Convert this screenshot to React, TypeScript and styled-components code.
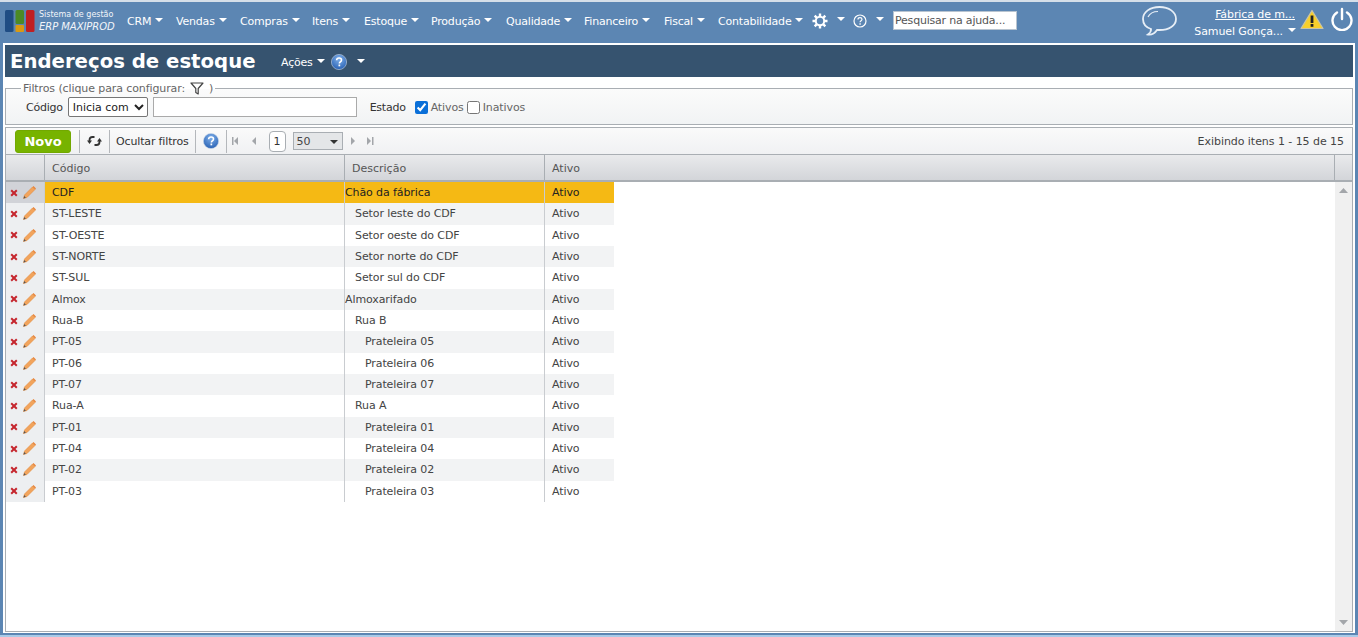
import React from "react";
import styled, { createGlobalStyle } from "styled-components";

const Global = createGlobalStyle`
  html, body { margin: 0; padding: 0; height: 100%; overflow: hidden; }
  body { font-family: Tahoma, "DejaVu Sans", sans-serif; font-size: 11px; color: #333; }
`;
const Page = styled.div`
  width: 1358px; height: 637px; box-sizing: border-box; background: #5c86b3;
  border-top: 2px solid #d5dfe9; border-bottom: 2px solid #a9cbe8;
  display: flex; flex-direction: column; overflow: hidden;
`;
const Nav = styled.nav`
  height: 41px; flex: none; display: flex; align-items: center; padding: 0 4px 4px 5px; box-sizing: border-box; color: #fff; position: relative;
`;
const Logo = styled.div`
  display: flex; align-items: center; gap: 4px; width: 122px; flex: none;
`;
const LogoText = styled.div`
  display: flex; flex-direction: column; font-size: 8px; line-height: 12px; color: #f2f5f9; white-space: nowrap;
  strong { font-size: 10px; font-weight: 400; font-style: italic; letter-spacing: -.05px; }
`;
const MenuItem = styled.div<{ $w: number }>`
  width: ${p => p.$w}px; flex: none; font-size: 11px; letter-spacing: -.2px; white-space: nowrap; display: flex; align-items: center; gap: 4px; color: #fff; padding-top: 1px;
`;
const Caret = styled.span<{ $color?: string; $gap?: number; $low?: boolean }>`
  width: 0; height: 0; flex: none; border-left: 4px solid transparent; border-right: 4px solid transparent; border-top: 4px solid ${p => p.$color || "#fff"};
  margin-top: ${p => p.$low ? 2 : -3}px; margin-left: ${p => p.$gap ?? 0}px;
`;
const IconSlot = styled.div<{ $w: number }>`
  width: ${p => p.$w}px; flex: none; display: flex; align-items: center; gap: 9px;
`;
const HelpSearch = styled.input`
  width: 124px; height: 19px; box-sizing: border-box; flex: none; border: 1px solid #b8c4d0; background: #fff; padding: 0 1px; font: 11px "DejaVu Sans", sans-serif; letter-spacing: -.2px; margin-right: 124px;
  &::placeholder { color: #555; opacity: 1; }
`;
const ChatIcon = styled.svg`
  flex: none;
`;
const UserBox = styled.div`
  width: 104px; flex: none; margin: 4px 4px 0 14px; display: flex; flex-direction: column; align-items: flex-end; gap: 4px; font-size: 11px; letter-spacing: -.1px;
  a { color: #fff; text-decoration: underline; margin-right: 1px; }
  span { display: flex; align-items: center; gap: 5px; }
`;
const WarnIcon = styled.svg`
  flex: none; margin-top: -2px;
`;
const PowerIcon = styled.svg`
  flex: none; margin: -4px 0 0 6px;
`;
const Main = styled.main`
  flex: 1; min-height: 0; margin: 0 3px 2px 3px; background: #fff; border: 2px solid #fff; border-bottom-width: 1px; display: flex; flex-direction: column; box-sizing: border-box;
`;
const TitleBar = styled.header`
  height: 32px; flex: none; background: #36536f; color: #fff; display: flex; align-items: center; padding: 0 0 0 5px;
`;
const Title = styled.h1`
  margin: 0 24px 0 0; font: 700 19.7px "DejaVu Sans", sans-serif; width: 247px; white-space: nowrap; color: #fff;
`;
const Acoes = styled.div`
  display: flex; align-items: center; gap: 4px; font-size: 11px; letter-spacing: -.2px; padding-top: 2px;
`;
const BallSlot = styled.span`
  display: flex; margin-left: 2px;
`;
const Filters = styled.fieldset`
  margin: 4px 0 2px 0; padding: 0 0 0 20px; height: 44px; box-sizing: border-box; flex: none; border: 1px solid #a9aeb3; background: linear-gradient(#fbfbfb, #f1f3f4); display: flex; align-items: center; min-width: 0;
  legend { padding: 0 2px; margin-left: -5px; font-size: 11px; color: #666; letter-spacing: -.1px; display: flex; align-items: center; gap: 5px; height: 14px; }
`;
const FilterRow = styled.div`
  display: flex; align-items: center; height: 24px;
`;
const Label = styled.label<{ $gap?: number }>`
  color: #333; font-size: 11px; letter-spacing: -.25px; margin-right: ${p => p.$gap ?? 0}px;
`;
const Select = styled.select`
  width: 80px; height: 20px; margin: 0 5px; box-sizing: border-box; font: 11px "DejaVu Sans", sans-serif; background: #fff; color: #222; border: 1px solid #767676; border-radius: 2px; padding: 0;
`;
const TextInput = styled.input`
  width: 204px; height: 20px; box-sizing: border-box; border: 1px solid #aaa; margin-right: 13px; padding: 0;
`;
const Check = styled.label`
  display: flex; align-items: center; gap: 3px; color: #666; font-size: 11px; letter-spacing: -.1px; margin-right: 3px;
  input { margin: 0; width: 13px; height: 13px; accent-color: #0a6fd8; }
`;
const Toolbar = styled.div`
  height: 28px; flex: none; box-sizing: border-box; border: 1px solid #a9aeb3; background: linear-gradient(#fafafa, #f0f1f3); display: flex; align-items: center; padding-left: 9px; font-size: 11px;
`;
const NewButton = styled.button`
  width: 56px; height: 23px; flex: none; box-sizing: border-box; border: 1px solid #72a800; border-radius: 3px; background: #77b300; color: #fff; font: 700 13px "DejaVu Sans", sans-serif; padding: 0; margin-right: 8px;
`;
const Sep = styled.div`
  width: 1px; height: 23px; background: #b4b7bb; flex: none;
`;
const ToolText = styled.div`
  padding: 0 6px; letter-spacing: -.15px; color: #333; white-space: nowrap;
`;
const ToolIcon = styled.div<{ $w: number }>`
  width: ${p => p.$w}px; flex: none; display: flex; align-items: center; justify-content: center;
`;
const PageNum = styled.div`
  width: 17px; height: 21px; flex: none; box-sizing: border-box; border: 1px solid #a9aeb3; border-radius: 4px; background: #fff; display: flex; align-items: center; justify-content: center; color: #333; margin-left: 5px;
`;
const PageSize = styled.div`
  width: 50px; height: 18px; flex: none; box-sizing: border-box; border: 1px solid #a9aeb3; background: #e4e6e8; display: flex; align-items: center; justify-content: space-between; padding: 0 4px 0 3px; margin: 0 4px 0 7px; color: #444;
`;
const Status = styled.div`
  margin-left: auto; padding-right: 8px; color: #444; white-space: nowrap; letter-spacing: -.05px;
`;
const Grid = styled.div`
  flex: 1; min-height: 0; box-sizing: border-box; border: 1px solid #a9aeb3; border-top: 0; display: flex; flex-direction: column;
`;
const GridHead = styled.div`
  height: 27px; flex: none; box-sizing: border-box; display: flex; background: linear-gradient(#e9eaec, #d3d5d9); border-bottom: 2px solid #a9aeb3; color: #555;
`;
const HeadCell = styled.div<{ $w: number; $flex?: boolean; $last?: boolean }>`
  ${p => p.$flex ? "flex: 1;" : `width: ${p.$w}px; flex: none;`} box-sizing: border-box; border-right: ${p => p.$last ? "0" : "1px solid #a9aeb3"}; padding: 1px 0 0 7px; display: flex; align-items: center;
`;
const GridBody = styled.div`
  flex: 1; min-height: 0; display: flex;
`;
const Rows = styled.div`
  flex: 1; min-width: 0;
`;
const Scroll = styled.div`
  width: 17px; flex: none; background: #f0f0f0; display: flex; flex-direction: column; justify-content: space-between; align-items: center; padding: 6px 0; box-sizing: border-box;
`;
const Row = styled.div<{ $alt: boolean }>`
  height: 21.33px; display: flex; width: 608px; background: ${p => p.$alt ? "#f2f3f4" : "#fff"};
`;
const Actions = styled.div<{ $selected: boolean }>`
  width: 39px; flex: none; box-sizing: border-box; background: ${p => p.$selected ? "#d1d3d8" : "#edeff1"}; border-right: 1px solid #c9ccd0; display: flex; align-items: center; padding-left: 4px; gap: 4px;
`;
const Cell = styled.div<{ $w: number; $selected: boolean; $indent?: number; $last?: boolean }>`
  width: ${p => p.$w}px; flex: none; box-sizing: border-box; display: flex; align-items: center; white-space: nowrap;
  padding-left: ${p => p.$indent ?? 7}px; border-right: ${p => p.$last ? "0" : "1px solid #c9ccd0"}; letter-spacing: -.1px;
  color: ${p => p.$selected ? "#222" : "#444"}; ${p => p.$selected ? "background: #f5b914;" : ""}
`;

const Cross = () => (
  <svg width="8" height="8" viewBox="0 0 8 8"><path d="M1.2 1.2l5.600 5.600M6.800 1.200l-5.600 5.600" stroke="#c5262e" strokeWidth="2" /></svg>
);
const Pencil = () => (
  <svg width="15" height="15" viewBox="0 0 15 15">
    <path d="M1.5 13.5l1-3.5 8-8 2.5 2.5-8 8z" fill="#f2a45c" stroke="#e08a3c" strokeWidth=".6" />
    <path d="M1.5 13.5l.7-2.4 1.7 1.7z" fill="#555" />
    <path d="M10.5 2l1-1 2.5 2.5-1 1z" fill="#e8843a" />
  </svg>
);
const HelpBall = ({ id }: { id: string }) => (
  <svg width="16" height="16" viewBox="0 0 16 16">
    <defs><radialGradient id={id} cx=".5" cy=".3" r=".8"><stop offset="0" stopColor="#7fb0ea" /><stop offset="1" stopColor="#1d57ad" /></radialGradient></defs>
    <circle cx="8" cy="8" r="7.6" fill={`url(#${id})`} stroke="#c6d5e8" strokeWidth=".6" />
    <path d="M5.6 6.2c.1-1.5 1.1-2.2 2.5-2.2 1.5 0 2.4.8 2.4 2 0 1-.6 1.5-1.3 2-.6.4-.8.7-.8 1.4" fill="none" stroke="#fff" strokeWidth="1.6" />
    <rect x="7.5" y="10.5" width="1.7" height="1.8" fill="#fff" />
  </svg>
);
const Step = ({ d }: { d: string }) => (
  <svg width="10" height="10" viewBox="0 0 10 10"><path d={d} fill="#a3a6aa" /></svg>
);
const Funnel = () => (
  <svg width="14" height="13" viewBox="0 0 14 13"><path d="M1 1h12L8.2 6.5V12L5.8 10.500v-4z" fill="#fff" stroke="#444" strokeWidth="1.2" strokeLinejoin="round" /></svg>
);
const Gear = () => (
  <svg width="16" height="16" viewBox="0 0 16 16">
    <g stroke="#fff" strokeWidth="2.4">
      <path d="M8 .5v3M8 12.5v3M.5 8h3M12.5 8h3M2.7 2.7l2.1 2.1M11.2 11.2l2.1 2.1M13.3 2.7l-2.1 2.1M4.8 11.2l-2.1 2.1" />
    </g>
    <circle cx="8" cy="8" r="4.2" fill="none" stroke="#fff" strokeWidth="2" />
  </svg>
);
const RoundHelp = () => (
  <svg width="14" height="14" viewBox="0 0 14 14">
    <circle cx="7" cy="7" r="6" fill="none" stroke="#fff" strokeWidth="1.2" />
    <path d="M5 5.500c0-1.200.9-1.800 2-1.800s2 .6 2 1.600c0 .9-.6 1.200-1.200 1.700-.5.3-.7.6-.7 1.200" fill="none" stroke="#fff" strokeWidth="1.2" />
    <rect x="6.400" y="9.300" width="1.400" height="1.400" fill="#fff" />
  </svg>
);

const menu: [string, number][] = [["CRM", 49], ["Vendas", 64], ["Compras", 72], ["Itens", 52], ["Estoque", 67], ["Produção", 75], ["Qualidade", 78], ["Financeiro", 80], ["Fiscal", 54], ["Contabilidade", 94]];

type R = [string, string, number];
const rows: R[] = [
  ["CDF", "Chão da fábrica", 0], ["ST-LESTE", "Setor leste do CDF", 10], ["ST-OESTE", "Setor oeste do CDF", 10],
  ["ST-NORTE", "Setor norte do CDF", 10], ["ST-SUL", "Setor sul do CDF", 10], ["Almox", "Almoxarifado", 0],
  ["Rua-B", "Rua B", 10], ["PT-05", "Prateleira 05", 20], ["PT-06", "Prateleira 06", 20], ["PT-07", "Prateleira 07", 20],
  ["Rua-A", "Rua A", 10], ["PT-01", "Prateleira 01", 20], ["PT-04", "Prateleira 04", 20], ["PT-02", "Prateleira 02", 20], ["PT-03", "Prateleira 03", 20],
];

export default function App() {
  return (
    <Page>
      <Global />
      <Nav>
        <Logo>
          <svg width="30" height="24" viewBox="0 0 30 24">
            <rect x="0" y="1" width="8.500" height="22" rx="1.500" fill="#1f4d84" />
            <rect x="10.500" y="1" width="8.500" height="14" rx="1.500" fill="#4b8a26" />
            <rect x="10.500" y="16" width="8.500" height="7" rx="1" fill="#d99a12" />
            <rect x="21" y="1" width="8.500" height="22" rx="1.500" fill="#c01f22" />
          </svg>
          <LogoText>
            <span>Sistema de gestão</span>
            <strong>ERP MAXIPROD</strong>
          </LogoText>
        </Logo>
        {menu.map(([t, w]) => (
          <MenuItem key={t} $w={w}>{t}<Caret /></MenuItem>
        ))}
        <IconSlot $w={41}><Gear /><Caret /></IconSlot>
        <IconSlot $w={40}><RoundHelp /><Caret /></IconSlot>
        <HelpSearch placeholder="Pesquisar na ajuda..." />
        <ChatIcon width="37" height="32" viewBox="0 0 37 32">
          <path d="M18.500 2C9 2 2 7 2 14c0 5 3.500 8.500 8 10 .3 2-1 4-3 5.500 4 .5 7-1.500 9-4.500h2.500C28 25 35 20.500 35 14 35 7 28 2 18.500 2z" fill="none" stroke="#e6eef6" strokeWidth="1.800" />
          <path d="M7 12c2-4 6-5.500 10-5.500" fill="none" stroke="#e6eef6" strokeWidth="1.200" />
        </ChatIcon>
        <UserBox>
          <a href="#x">Fábrica de m...</a>
          <span>Samuel Gonça...<Caret /></span>
        </UserBox>
        <WarnIcon width="24" height="21" viewBox="0 0 24 21">
          <path d="M12 1.500L23 19.500H1z" fill="#f8d02c" stroke="#c9c4a8" strokeWidth="1.200" strokeLinejoin="round" />
          <rect x="10.600" y="6.500" width="2.800" height="7.500" fill="#222" />
          <rect x="10.600" y="15" width="2.800" height="2.800" fill="#222" />
        </WarnIcon>
        <PowerIcon width="24" height="24" viewBox="0 0 24 24">
          <path d="M7 5.500a9.500 9.500 0 1 0 10 0" fill="none" stroke="#fff" strokeWidth="2.400" strokeLinecap="round" />
          <path d="M12 2v10" stroke="#fff" strokeWidth="2.400" strokeLinecap="round" />
        </PowerIcon>
      </Nav>
      <Main>
        <TitleBar>
          <Title>Endereços de estoque</Title>
          <Acoes>Ações<Caret /><BallSlot><HelpBall id="hb1" /></BallSlot><Caret $gap={6} /></Acoes>
        </TitleBar>
        <Filters>
          <legend>Filtros (clique para configurar: <Funnel /> )</legend>
          <FilterRow>
            <Label>Código</Label>
            <Select defaultValue="i"><option value="i">Inicia com</option></Select>
            <TextInput />
            <Label $gap={9}>Estado</Label>
            <Check><input type="checkbox" defaultChecked />Ativos</Check>
            <Check><input type="checkbox" />Inativos</Check>
          </FilterRow>
        </Filters>
        <Toolbar>
          <NewButton>Novo</NewButton>
          <Sep />
          <ToolIcon $w={29}>
            <svg width="16" height="12" viewBox="0 0 16 12">
              <path d="M2.500 7V5c0-2 1-3 3-3h2" fill="none" stroke="#333" strokeWidth="1.800" />
              <path d="M0 5.500h5L2.500 9z" fill="#333" />
              <path d="M12.500 5v2c0 2-1 3-3 3h-2" fill="none" stroke="#333" strokeWidth="1.800" />
              <path d="M10 6.500h5L12.500 3z" fill="#333" />
            </svg>
          </ToolIcon>
          <Sep />
          <ToolText>Ocultar filtros</ToolText>
          <Sep />
          <ToolIcon $w={30}><HelpBall id="hb2" /></ToolIcon>
          <Sep />
          <ToolIcon $w={17}><Step d="M2 1h1.500v8H2zM8 1v8L4 5z" /></ToolIcon>
          <ToolIcon $w={20}><Step d="M7 1v8L3 5z" /></ToolIcon>
          <PageNum>1</PageNum>
          <PageSize>50<Caret $color="#333" $low /></PageSize>
          <ToolIcon $w={12}><Step d="M3 1v8l4-4z" /></ToolIcon>
          <ToolIcon $w={22}><Step d="M2 1v8l4-4zM7 1h1.500v8H7z" /></ToolIcon>
          <Status>Exibindo itens 1 - 15 de 15</Status>
        </Toolbar>
        <Grid>
          <GridHead>
            <HeadCell $w={39} />
            <HeadCell $w={300}>Código</HeadCell>
            <HeadCell $w={200}>Descrição</HeadCell>
            <HeadCell $w={0} $flex>Ativo</HeadCell>
            <HeadCell $w={17} $last />
          </GridHead>
          <GridBody>
            <Rows>
              {rows.map(([c, d, ind], i) => {
                const sel = i === 0;
                return (
                  <Row key={c} $alt={i % 2 === 1}>
                    <Actions $selected={sel}><Cross /><Pencil /></Actions>
                    <Cell $w={300} $selected={sel}>{c}</Cell>
                    <Cell $w={200} $selected={sel} $indent={ind}>{d}</Cell>
                    <Cell $w={69} $selected={sel} $last>Ativo</Cell>
                  </Row>
                );
              })}
            </Rows>
            <Scroll>
              <svg width="9" height="5" viewBox="0 0 9 5"><path d="M4.500 0L9 5H0z" fill="#a3a6aa" /></svg>
              <svg width="9" height="5" viewBox="0 0 9 5"><path d="M0 0h9L4.500 5z" fill="#a3a6aa" /></svg>
            </Scroll>
          </GridBody>
        </Grid>
      </Main>
    </Page>
  );
}
